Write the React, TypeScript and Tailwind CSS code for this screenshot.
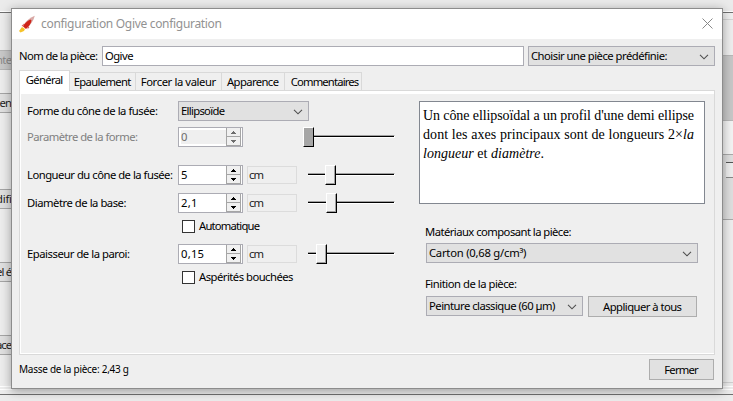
import React, { useLayoutEffect, useRef, useState } from "react";

/* Text that tracks its letters so the run fills exactly `w` pixels. */
function Fit({ w, className = "mb-px", children }: { w: number; className?: string; children: React.ReactNode }) {
  const ref = useRef<HTMLSpanElement>(null);
  const [gap, setGap] = useState(0);
  useLayoutEffect(() => {
    const el = ref.current;
    if (!el) return;
    const n = (el.textContent || "").length;
    if (n > 1) setGap((w + 1 - el.getBoundingClientRect().width) / (n - 1));
  }, [w]);
  return (
    <span ref={ref} className={`inline-block shrink-0 ${className}`} style={{ letterSpacing: gap, marginRight: -gap }}>
      {children}
    </span>
  );
}

function Caret() {
  return (
    <svg width="10" height="6" viewBox="0 0 10 6" className="mt-0.5 shrink-0" fill="none" stroke="#505050" strokeWidth="1.1">
      <path d="M1 .8 5 4.8 9 .8" />
    </svg>
  );
}

function Combo({ className, children }: { className: string; children: React.ReactNode }) {
  return (
    <div className={`flex h-5 shrink-0 items-center justify-between border border-[#acacb4] bg-[#e1e1e1] pr-[5px] pl-[2px] ${className}`}>
      {children}
      <Caret />
    </div>
  );
}

function Arrow({ up, disabled }: { up?: boolean; disabled?: boolean }) {
  return (
    <div className="flex h-[9px] items-center justify-center border-r border-b border-[#a5a5a5] bg-[#f0f0f0]">
      <svg width="5" height="3" viewBox="0 0 5 3" fill={disabled ? "#6d6d6d" : "#000"} shapeRendering="crispEdges">
        <path d={up ? "M2 0h1v1h1v1h1v1H0V2h1V1h1z" : "M0 0h5v1H4v1H3v1H2V2H1V1H0z"} />
      </svg>
    </div>
  );
}

function Spinner({ children, disabled }: { children: React.ReactNode; disabled?: boolean }) {
  return (
    <div className="flex h-5 w-[65px] shrink-0 items-stretch border border-[#acacb4] bg-white pr-px">
      <div className={`my-0.5 ml-0.5 flex w-[45px] items-center ${disabled ? "bg-[#efefef] text-[#6d6d6d]" : ""}`}>{children}</div>
      <div className="flex w-[15px] flex-col border-l border-[#a5a5a5]">
        <Arrow up disabled={disabled} />
        <Arrow disabled={disabled} />
      </div>
    </div>
  );
}

function Slider({ width, lead, disabled }: { width: string; lead: string; disabled?: boolean }) {
  return (
    <div className={`flex h-5 items-start ${width}`}>
      <div className={`mt-2 h-[3px] border-t border-b border-t-[#a0a0a0] border-b-white bg-black ${lead}`} />
      <div className={`h-5 w-[11px] shrink-0 border-t border-r border-b border-l border-t-white border-r-black border-b-black border-l-white ${disabled ? "bg-[#a6a6a6]" : "bg-[#f0f0f0] shadow-[inset_-1px_-1px_0_#a0a0a0]"}`} />
      <div className="mt-2 h-[3px] flex-1 border-t border-r border-b border-t-[#a0a0a0] border-r-white border-b-white bg-black" />
    </div>
  );
}

function Unit() {
  return (
    <div className="mr-[11px] ml-1 flex h-[18px] w-[50px] shrink-0 items-center border border-[#dcdcdc] pl-px text-[#222]">
      <Fit w={14}>cm</Fit>
    </div>
  );
}

function Check({ children }: { children: React.ReactNode }) {
  return (
    <div className="ml-[155px] flex h-[13px] items-center gap-[3px]">
      <div className="size-[13px] border border-[#333] bg-white" />
      {children}
    </div>
  );
}

function Label({ w, className = "", children }: { w: number; className?: string; children: React.ReactNode }) {
  return (
    <div className={`flex w-[151px] shrink-0 ${className}`}>
      <Fit w={w}>{children}</Fit>
    </div>
  );
}

const stub = "flex h-5 shrink-0 items-center justify-end border-y border-[#a5a5a5] bg-black/5";
const tab = "flex h-[19px] items-center justify-center border-t border-r border-b border-[#d9d9d9]";

function Backdrop() {
  return (
    <div className="flex h-[401px] w-[733px] flex-col bg-[#ececec]">
      <div className="h-3 shrink-0 border-b border-white bg-[#ebebeb]" />
      <div className="flex h-[382px] shrink-0 justify-between border-t border-[#707070]">
        <div className="flex w-3 flex-col overflow-hidden bg-[#ededed] text-[#222]">
          <div className="mt-[37px] flex h-5 shrink-0 items-center justify-end border-y border-[#b5b5b5] bg-[#c8c8c8] text-[#888]"><Fit w={15}>nte</Fit></div>
          <div className={`mt-[23px] ${stub}`}><Fit w={15}>ten</Fit></div>
          <div className={`mt-[76px] ${stub}`}><Fit w={15}>difi</Fit></div>
          <div className={`mt-[53px] ${stub}`}><Fit w={15}>el é</Fit></div>
          <div className={`mt-[53px] ${stub}`}><Fit w={15}>ace</Fit></div>
          <div className="mt-[31px] h-1 border-y border-white" />
        </div>
        <div className="flex w-[11px] flex-col">
          <div className="h-[7px] border-b border-[#d6d6d6] bg-[#f0f0f0]" />
          <div className="h-[35px] bg-[#efefef]" />
          <div className="h-[66px] border-y border-[#b8b8b8] bg-[#c8c8c8]" />
          <div className="h-[34px] border-b border-[#aaa] bg-[#f4f4f4]" />
          <div className="flex h-[65px] flex-col items-end border-b border-[#aaa] bg-[#dfdfdf] pt-[7px]">
            <div className="h-4 w-[7px] border-t border-b border-t-[#555] border-b-[#888] bg-[#eee]" />
          </div>
          <div className="h-[163px] border-b border-[#d0d0d0] bg-[#efefef]" />
          <div className="mt-[3px] h-1 border-y border-white" />
        </div>
      </div>
      <div className="h-[7px] shrink-0 border-t border-[#707070] bg-[#ececec]" />
    </div>
  );
}

export default function App() {
  return (
    <div className="relative h-[401px] w-[733px] overflow-hidden font-['Noto_Sans',sans-serif] text-[11.25px] leading-[11px] whitespace-nowrap text-black">
      <Backdrop />
      <div className="absolute top-2 left-[11px] flex h-[381px] w-[712px] flex-col border border-[#8c8c8c] bg-[#efefef] shadow-[0_2px_10px_rgba(0,0,0,0.35)]">
        <div className="flex h-[30px] shrink-0 items-center bg-white pl-[7px] text-[#929292]">
          <svg width="17" height="18" viewBox="0 0 17 18" className="shrink-0">
            <path d="M15.800.800C11.500 2.500 7.500 5.500 4.500 10l3.500 3C12 9.500 14.500 5.500 15.800.800Z" fill="#d9a9a6" />
            <path d="M11.500 4.500C8 6 5.500 8.500 4 11.500l3 2.500c3-2.500 5-5.500 5.500-8.500Z" fill="#cf2419" />
            <path d="m5 8.500-2.500 2.500 2 .500zM9 11.500l-.500 3 2-2.500z" fill="#dd5a50" />
            <path d="m3 12 3 2-1 2-3.500 1.500-1.500-1.500z" fill="#f6c32a" />
          </svg>
          <Fit w={180} className="ml-[5px] text-[12px] leading-3">configuration Ogive configuration</Fit>
          <svg width="11" height="11" viewBox="0 0 11 11" className="mr-[9px] mb-[2px] ml-auto" stroke="#888" strokeWidth="1"><path d="m.5.5 10 10m0-10-10 10" /></svg>
        </div>
        <div className="mt-[7px] flex h-5 shrink-0 items-center pl-[7px]">
          <div className="flex w-[83px] shrink-0"><Fit w={78}>Nom de la pièce:</Fit></div>
          <div className="flex h-5 w-[422px] items-center border border-[#acacb4] bg-white pl-[2px]"><Fit w={27.5}>Ogive</Fit></div>
          <Combo className="ml-1 w-[187px]"><Fit w={135.5}>Choisir une pièce prédéfinie:</Fit></Combo>
        </div>
        <div className="z-10 mt-1 ml-[7px] flex h-[21px] shrink-0 items-end">
          <div className="flex h-[21px] w-[51px] items-center justify-center border border-b-0 border-[#d9d9d9] bg-white"><Fit w={36.5} className="mb-[3px]">Général</Fit></div>
          <div className={`w-[66px] ${tab}`}><Fit w={56.5}>Epaulement</Fit></div>
          <div className={`w-[86px] ${tab}`}><Fit w={74.5}>Forcer la valeur</Fit></div>
          <div className={`w-[63px] ${tab}`}><Fit w={51}>Apparence</Fit></div>
          <div className={`w-[77px] pl-1 ${tab}`}><Fit w={67.5}>Commentaires</Fit></div>
        </div>
        <div className="-mt-px ml-[7px] flex h-[265px] w-[696px] shrink-0 border border-[#d9d9d9]">
          <div className="flex w-[694px] border border-t-[3px] border-r-0 border-white">
            <div className="flex w-[398px] flex-col pt-[7px] pl-[6px]">
              <div className="flex h-5 items-center"><Label w={130}>Forme du cône de la fusée:</Label><Combo className="w-[131px]"><Fit w={43}>Ellipsoïde</Fit></Combo></div>
              <div className="mt-1.5 flex h-5 items-center"><Label w={110} className="text-[#808080]">Paramètre de la forme:</Label><Spinner disabled><Fit w={6}>0</Fit></Spinner><div className="ml-[60px]"><Slider width="w-[92px]" lead="w-0" disabled /></div></div>
              <div className="mt-[18px] flex h-5 items-center"><Label w={145}>Longueur du cône de la fusée:</Label><Spinner><Fit w={6}>5</Fit></Spinner><Unit /><Slider width="w-[87px]" lead="w-[17px]" /></div>
              <div className="mt-2 flex h-5 items-center"><Label w={98.5}>Diamètre de la base:</Label><Spinner><Fit w={15.5}>2,1</Fit></Spinner><Unit /><Slider width="w-[87px]" lead="w-[18px]" /></div>
              <div className="mt-[7px]"><Check><Fit w={60} className="mb-[2px] ml-px">Automatique</Fit></Check></div>
              <div className="mt-[11px] flex h-5 items-center"><Label w={102}>Epaisseur de la paroi:</Label><Spinner><Fit w={22}>0,15</Fit></Spinner><Unit /><Slider width="w-[87px]" lead="w-[8px]" /></div>
              <div className="mt-[7px]"><Check><Fit w={93.5} className="mb-[2px] ml-px">Aspérités bouchées</Fit></Check></div>
            </div>
            <div className="flex flex-col pt-[7px]">
              <div className="flex h-[103px] w-[286px] flex-col items-start border border-[#828790] bg-white pt-[4px] pl-[3px] font-['Liberation_Serif',serif] text-[14px] leading-[19px]">
                <Fit w={270} className="">Un cône ellipsoïdal a un profil d'une demi ellipse</Fit>
                <Fit w={270} className="">dont les axes principaux sont de longueurs 2×<i>la</i></Fit>
                <Fit w={120} className=""><i>longueur</i> et <i>diamètre</i>.</Fit>
              </div>
              <div className="ml-[7px] flex flex-col">
                <div className="-ml-px mt-[22px] mb-[5px] flex h-3"><Fit w={145.5}>Matériaux composant la pièce:</Fit></div>
                <Combo className="w-[272px]"><Fit w={96.5}>Carton (0,68 g/cm³)</Fit></Combo>
                <div className="-ml-px mt-[15px] mb-[6px] flex h-3"><Fit w={91}>Finition de la pièce:</Fit></div>
                <div className="flex gap-[5px]">
                  <Combo className="w-[157px]"><Fit w={125.5}>Peinture classique (60 µm)</Fit></Combo>
                  <div className="flex h-[21px] w-[109px] items-center justify-center border border-[#adadad] bg-[#e1e1e1]"><Fit w={78}>Appliquer à tous</Fit></div>
                </div>
              </div>
            </div>
          </div>
        </div>
        <div className="mt-1 mr-2 ml-[7px] flex h-[21px] shrink-0 items-center justify-between">
          <Fit w={109} className="text-[10px]">Masse de la pièce: 2,43 g</Fit>
          <div className="flex h-[21px] w-[65px] items-center justify-center border border-[#adadad] bg-[#e1e1e1]"><Fit w={33.5}>Fermer</Fit></div>
        </div>
      </div>
    </div>
  );
}
